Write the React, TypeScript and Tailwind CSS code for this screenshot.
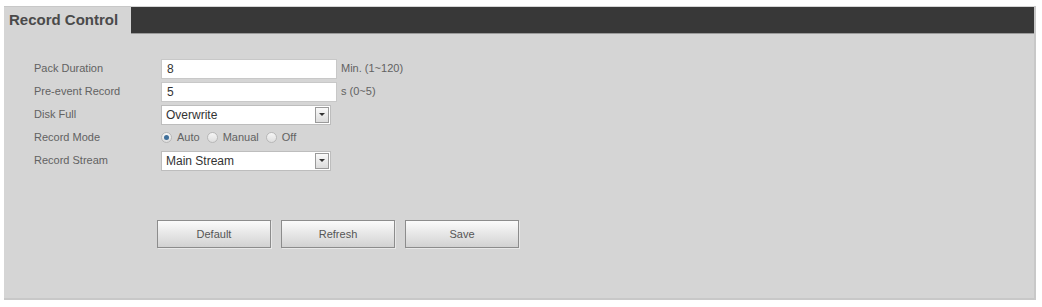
import { useState } from "react";

// Small arrow box used by the select boxes
const SelectBox = ({ value, options, width }: { value: string; options: string[]; width: string }) => {
  const [val, setVal] = useState(value);
  return (
    <div className={`relative flex h-[20px] items-center border border-[#bdbdbd] bg-white ${width}`}>
      <select
        className="h-full w-full appearance-none bg-transparent pl-[4px] text-[12px] text-[#333] outline-none"
        value={val}
        onChange={(e) => setVal(e.target.value)}
      >
        {options.map((o) => (
          <option key={o}>{o}</option>
        ))}
      </select>
      <div className="pointer-events-none absolute right-[1px] top-[1px] flex h-[16px] w-[14px] items-center justify-center border border-[#9a9a9a] bg-gradient-to-b from-[#fafafa] to-[#dcdcdc]">
        <div className="h-0 w-0 border-x-[3px] border-t-[3px] border-x-transparent border-t-[#333]" />
      </div>
    </div>
  );
};

const Radio = ({ checked, label, onClick }: { checked: boolean; label: string; onClick: () => void }) => (
  <label className="flex cursor-pointer items-center gap-[5px]" onClick={onClick}>
    <span className="flex h-[11px] w-[11px] items-center justify-center rounded-full border border-[#b8b8b8] bg-gradient-to-b from-[#f6f6f6] to-[#dedede]">
      {checked && <span className="h-[5px] w-[5px] rounded-full bg-[#3f6f9a]" />}
    </span>
    <span>{label}</span>
  </label>
);

const Row = ({ label, children }: { label: string; children: React.ReactNode }) => (
  <div className="flex h-[23px] items-center">
    <div className="w-[127px] shrink-0">{label}</div>
    {children}
  </div>
);

export default function App() {
  const [mode, setMode] = useState("Auto");
  const [pack, setPack] = useState("8");
  const [pre, setPre] = useState("5");

  return (
    <div
      className="h-[307px] w-[1042px] bg-white pl-[4px] pr-[6px] pt-[6px]"
      style={{ fontFamily: '"Liberation Sans", Arial, sans-serif' }}
    >
      <div className="flex h-[294px] flex-col border-b-[2px] border-r-[2px] border-[#c8c8c8] bg-[#d5d5d5]">
        {/* header */}
        <div className="flex h-[28px]">
          <div className="flex w-[127px] items-center border-t border-[#c8c8c8] pl-[5px] text-[15px] font-bold text-[#4a4a4a]">
            Record Control
          </div>
          <div className="mt-[1px] h-[27px] flex-1 border-b border-[#9a9a9a] bg-[#383838]" />
        </div>

        {/* form */}
        <div className="flex flex-col pl-[30px] pt-[23px] text-[11px] text-[#626262]">
          <Row label="Pack Duration">
            <input
              className="h-[20px] w-[176px] border border-[#c8c8c8] bg-white px-[5px] text-[12px] text-[#333] outline-none"
              value={pack}
              onChange={(e) => setPack(e.target.value)}
            />
            <span className="ml-[4px]">Min. (1~120)</span>
          </Row>
          <Row label="Pre-event Record">
            <input
              className="h-[20px] w-[176px] border border-[#c8c8c8] bg-white px-[5px] text-[12px] text-[#333] outline-none"
              value={pre}
              onChange={(e) => setPre(e.target.value)}
            />
            <span className="ml-[4px]">s (0~5)</span>
          </Row>
          <Row label="Disk Full">
            <SelectBox value="Overwrite" options={["Overwrite", "Stop"]} width="w-[170px]" />
          </Row>
          <Row label="Record Mode">
            <div className="flex items-center gap-[7px]">
              {["Auto", "Manual", "Off"].map((m) => (
                <Radio key={m} checked={mode === m} label={m} onClick={() => setMode(m)} />
              ))}
            </div>
          </Row>
          <Row label="Record Stream">
            <SelectBox value="Main Stream" options={["Main Stream", "Sub Stream"]} width="w-[170px]" />
          </Row>

          <div className="ml-[123px] mt-[48px] flex gap-[10px]">
            {["Default", "Refresh", "Save"].map((b) => (
              <button
                key={b}
                className="h-[28px] w-[114px] border border-[#8c8c8c] bg-gradient-to-b from-[#fbfbfb] to-[#d2d2d2] text-[11px] text-[#555] shadow-[1px_1px_0_#e8e8e8]"
              >
                {b}
              </button>
            ))}
          </div>
        </div>
      </div>
    </div>
  );
}
